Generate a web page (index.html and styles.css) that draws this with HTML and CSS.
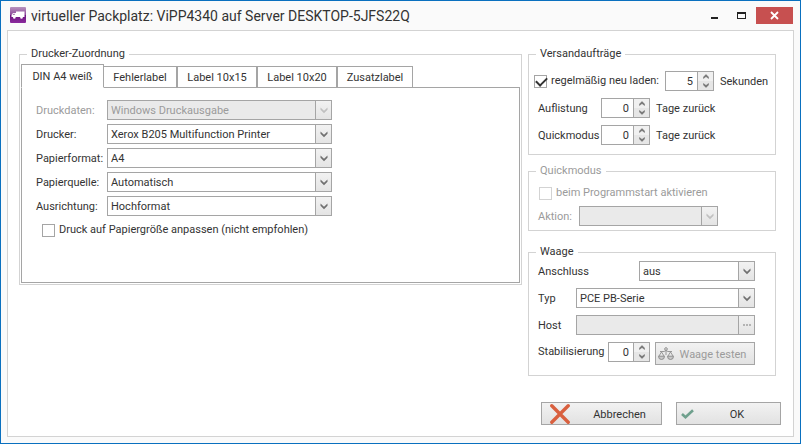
FILE: index.html
```html
<!DOCTYPE html>
<html lang="de">
<head>
<meta charset="utf-8">
<title>virtueller Packplatz</title>
<link rel="stylesheet" href="styles.css">
</head>
<body>
<svg class="sprite" aria-hidden="true">
  <symbol id="chevron" viewBox="0 0 8 7"><path d="M.5.500v2.200L4 6.200l3.500-3.500V.500L4 3.700z" fill="currentColor"/></symbol>
  <symbol id="up" viewBox="0 0 6 5"><path d="M.5 4.500V3L3 .5 5.500 3v1.500L3 2.500z" fill="currentColor" stroke="currentColor" stroke-width=".5"/></symbol>
  <symbol id="down" viewBox="0 0 6 5"><path d="M.5.5V2L3 4.500 5.500 2V.5L3 2.500z" fill="currentColor" stroke="currentColor" stroke-width=".5"/></symbol>
</svg>
<div class="window">
  <header class="titlebar">
    <svg class="app-icon" viewBox="0 0 16 16" aria-hidden="true">
      <defs><linearGradient id="violet" x1="0" y1="0" x2="0" y2="1"><stop offset="0" stop-color="#b794be"/><stop offset=".48" stop-color="#8f4a9c"/><stop offset=".52" stop-color="#6d1780"/><stop offset="1" stop-color="#8b2a9d"/></linearGradient></defs>
      <rect width="16" height="16" rx="1" fill="url(#violet)"/>
      <path d="M6 4.500h8.500v5.500H6zM3 6h3v4H1.500V8z" fill="#fff"/>
      <path d="M3.400 6.800h1.400v1.200H2.600z" fill="#a779b0"/>
      <circle cx="4.300" cy="10.500" r="1.300" fill="#fff"/><circle cx="11.500" cy="10.500" r="1.300" fill="#fff"/>
    </svg>
    <h1>virtueller Packplatz: ViPP4340 auf Server DESKTOP-5JFS22Q</h1>
    <div class="window-buttons">
      <button type="button" class="win-btn" aria-label="Minimieren"><svg width="9" height="9" viewBox="0 0 9 9"><path d="M1 6h7v2H1z" fill="#222"/></svg></button>
      <button type="button" class="win-btn" aria-label="Maximieren"><svg width="9" height="9" viewBox="0 0 9 9"><path d="M0 1h9v7H0zM1 3v4h7V3z" fill="#222" fill-rule="evenodd"/></svg></button>
      <button type="button" class="win-btn win-close" aria-label="Schließen"><svg width="9" height="9" viewBox="0 0 9 9"><path d="M1 1l7 7M8 1L1 8" stroke="#fff" stroke-width="1.800"/></svg></button>
    </div>
  </header>

  <form class="client">
    <div class="columns">
      <fieldset class="group printers">
        <legend>Drucker-Zuordnung</legend>
        <div class="tabs" role="tablist">
          <button type="button" role="tab" aria-selected="true" class="tab active">DIN A4 weiß</button>
          <button type="button" role="tab" aria-selected="false" class="tab">Fehlerlabel</button>
          <button type="button" role="tab" aria-selected="false" class="tab">Label 10x15</button>
          <button type="button" role="tab" aria-selected="false" class="tab">Label 10x20</button>
          <button type="button" role="tab" aria-selected="false" class="tab">Zusatzlabel</button>
        </div>
        <div class="tab-panel" role="tabpanel">
          <div class="field disabled"><label for="data">Druckdaten:</label>
            <span class="combo"><select id="data" disabled><option>Windows Druckausgabe</option></select><span class="arrow"><svg width="8" height="7"><use href="#chevron"/></svg></span></span></div>
          <div class="field"><label for="printer">Drucker:</label>
            <span class="combo"><select id="printer"><option>Xerox B205 Multifunction Printer</option></select><span class="arrow"><svg width="8" height="7"><use href="#chevron"/></svg></span></span></div>
          <div class="field"><label for="format">Papierformat:</label>
            <span class="combo"><select id="format"><option>A4</option></select><span class="arrow"><svg width="8" height="7"><use href="#chevron"/></svg></span></span></div>
          <div class="field"><label for="source">Papierquelle:</label>
            <span class="combo"><select id="source"><option>Automatisch</option></select><span class="arrow"><svg width="8" height="7"><use href="#chevron"/></svg></span></span></div>
          <div class="field"><label for="orient">Ausrichtung:</label>
            <span class="combo"><select id="orient"><option>Hochformat</option></select><span class="arrow"><svg width="8" height="7"><use href="#chevron"/></svg></span></span></div>
          <label class="check fit"><input type="checkbox">Druck auf Papiergröße anpassen (nicht empfohlen)</label>
        </div>
      </fieldset>

      <div class="side">
        <fieldset class="group orders">
          <legend>Versandaufträge</legend>
          <div class="row reload">
            <label class="check"><input type="checkbox" checked>regelmäßig neu laden:</label>
            <span class="spin"><input type="text" inputmode="numeric" value="5" aria-label="Sekunden"><span class="steps"><button type="button" aria-label="Mehr"><svg width="6" height="5"><use href="#up"/></svg></button><button type="button" aria-label="Weniger"><svg width="6" height="5"><use href="#down"/></svg></button></span></span>
            <span class="unit">Sekunden</span>
          </div>
          <div class="row days">
            <label for="list">Auflistung</label>
            <span class="spin"><input id="list" type="text" inputmode="numeric" value="0"><span class="steps"><button type="button" aria-label="Mehr"><svg width="6" height="5"><use href="#up"/></svg></button><button type="button" aria-label="Weniger"><svg width="6" height="5"><use href="#down"/></svg></button></span></span>
            <span class="unit">Tage zurück</span>
          </div>
          <div class="row days">
            <label for="quick">Quickmodus</label>
            <span class="spin"><input id="quick" type="text" inputmode="numeric" value="0"><span class="steps"><button type="button" aria-label="Mehr"><svg width="6" height="5"><use href="#up"/></svg></button><button type="button" aria-label="Weniger"><svg width="6" height="5"><use href="#down"/></svg></button></span></span>
            <span class="unit">Tage zurück</span>
          </div>
        </fieldset>

        <fieldset class="group quickmode disabled" disabled>
          <legend>Quickmodus</legend>
          <label class="check"><input type="checkbox">beim Programmstart aktivieren</label>
          <div class="row action">
            <label for="action">Aktion:</label>
            <span class="combo"><select id="action"><option></option></select><span class="arrow"><svg width="8" height="7"><use href="#chevron"/></svg></span></span>
          </div>
        </fieldset>

        <fieldset class="group scale">
          <legend>Waage</legend>
          <div class="row port"><label for="port">Anschluss</label>
            <span class="combo"><select id="port"><option>aus</option></select><span class="arrow"><svg width="8" height="7"><use href="#chevron"/></svg></span></span></div>
          <div class="row"><label for="type">Typ</label>
            <span class="combo"><select id="type"><option>PCE PB-Serie</option></select><span class="arrow"><svg width="8" height="7"><use href="#chevron"/></svg></span></span></div>
          <div class="row"><label for="host">Host</label>
            <span class="combo host"><input id="host" type="text" disabled><button type="button" class="more" disabled aria-label="Host auswählen"><svg width="8" height="2" viewBox="0 0 8 2"><path d="M0 0h2v2H0zM3 0h2v2H3zM6 0h2v2H6z" fill="#b4b4b4"/></svg></button></span></div>
          <div class="row stab"><label for="stab">Stabilisierung</label>
            <span class="spin"><input id="stab" type="text" inputmode="numeric" value="0"><span class="steps"><button type="button" aria-label="Mehr"><svg width="6" height="5"><use href="#up"/></svg></button><button type="button" aria-label="Weniger"><svg width="6" height="5"><use href="#down"/></svg></button></span></span>
            <button type="button" class="btn test" disabled><svg width="16" height="16" viewBox="0 0 16 16" fill="none" stroke="#8e8e8e" aria-hidden="true"><circle cx="8" cy="3" r="1.300"/><path d="M8 4.500V9M2 5.500h4l2-1 2 1h4M3.500 6L1 10M3.500 6L6 10M12.500 6L10 10M12.500 6l2.500 4" stroke-width=".9"/><path d="M.5 10.200h6a3 3.300 0 0 1-6 0zM9.500 10.200h6a3 3.300 0 0 1-6 0z" fill="#c8c8c8"/></svg><span>Waage testen</span></button></div>
        </fieldset>
      </div>
    </div>

    <footer class="actions">
      <button type="button" class="btn cancel"><svg width="20" height="20" viewBox="0 0 20 20" aria-hidden="true"><path d="M1.800 1.800l16.400 16.400M18.200 1.800L1.800 18.200" stroke="#d9603f" stroke-width="3.400" stroke-linecap="round"/></svg><span>Abbrechen</span></button>
      <button type="submit" class="btn ok"><svg width="13" height="10" viewBox="0 0 13 10" aria-hidden="true"><path d="M1 5l3.500 3.200L12 1.200" fill="none" stroke="#6fa08d" stroke-width="2.600"/></svg><span>OK</span></button>
    </footer>
  </form>
</div>
</body>
</html>
```
FILE: styles.css
```css
* { box-sizing: border-box; }

body {
  margin: 0;
  font: 11px/16px Roboto, "Liberation Sans", sans-serif;
  color: #333;
}

button, input, select { font: inherit; color: inherit; margin: 0; }
svg { display: block; flex: none; }
.sprite { display: none; }

.window {
  min-height: 100vh;
  display: flex;
  flex-direction: column;
  padding: 0 6px 6px;
  border: 1px solid #0a70bf;
  background: #fafafa;
}

.titlebar {
  display: flex;
  height: 29px;
  padding-left: 3px;
}
.app-icon { width: 16px; height: 16px; margin-top: 6px; }
.titlebar h1 {
  flex: 1;
  margin: 0 0 0 5px;
  font-size: 14px;
  font-weight: 400;
  line-height: 30px;
  white-space: nowrap;
}
.window-buttons { display: flex; padding: 6px 1px 0 0; }
.win-btn {
  width: 27px;
  height: 17px;
  padding: 0;
  border: 0;
  background: none;
  display: grid;
  place-items: center;
}
.win-close { width: 37px; margin-left: 1px; background: #c75050; }

.client {
  flex: 1;
  display: flex;
  flex-direction: column;
  padding: 15px 12px 11px 11px;
  border: 1px solid #d3d3d3;
  background: #fff;
}

.columns {
  display: grid;
  grid-template-columns: minmax(0, 1fr) 248px;
  gap: 6px;
  align-items: start;
  padding-right: 5px;
}
.side { display: flex; flex-direction: column; }

.group {
  --inset: 1px;
  min-width: 0;
  margin: 0;
  padding: 0 var(--inset);
  border: 1px solid #d3d3d3;
}
.group legend { margin-left: calc(7px - var(--inset)); padding: 0 4px; }
.disabled { color: #9b9b9b; }

.printers { padding-top: 2px; padding-bottom: 1px; }
.tabs { display: flex; align-items: flex-end; height: 24px; }
.tab {
  width: 80px;
  height: 22px;
  padding: 2px 0 0;
  border: 1px solid #a5a5a5;
  background: #fff;
  white-space: nowrap;
}
.tab.active {
  position: relative;
  z-index: 1;
  width: 83px;
  height: 24px;
  border-bottom-color: #fff;
}
.tab.active + .tab { width: 73px; border-left: 0; }
.tab:last-child { width: 76px; }
.tab-panel {
  height: 196px;
  margin-top: -1px;
  padding: 12px 14px;
  border: 1px solid #a5a5a5;
  display: flex;
  flex-direction: column;
  gap: 4px;
}

.field { display: grid; grid-template-columns: 71px 225px; align-items: center; }
.field label, .row > label:not(.check), .unit { padding-top: 2px; }

.combo {
  display: grid;
  grid-template-columns: 1fr 16px;
  height: 20px;
  border: 1px solid #a5a5a5;
  background: #fff;
}
.combo select, .combo input {
  grid-area: 1 / 1 / 2 / 3;
  min-width: 0;
  width: 100%;
  padding: 2px 18px 0 3px;
  border: 0;
  appearance: none;
  background: transparent;
  opacity: 1;
}
.arrow, .more {
  grid-area: 1 / 2;
  display: grid;
  place-items: center;
  padding: 0;
  border: 0;
  border-left: 1px solid #a5a5a5;
  background: linear-gradient(#f2f2f2, #e4e4e4);
  color: #707070;
  pointer-events: none;
}
.disabled .combo, .host { background: #eaeaea; }
.disabled .arrow { color: #c0c0c0; }

.check { display: flex; align-items: center; gap: 4px; white-space: nowrap; }
.check input {
  appearance: none;
  width: 13px;
  height: 13px;
  border: 1px solid #a5a5a5;
  background: #fff;
}
.check input:checked::before {
  content: "";
  display: block;
  width: 9px;
  height: 5px;
  margin: 1px;
  border: solid #333;
  border-width: 0 0 2px 2px;
  transform: rotate(-45deg);
}
.disabled .check input { border-color: #d3d3d3; }
.fit { padding: 2px 0 0 6px; }

.row { display: grid; grid-template-columns: 38px 1fr; align-items: center; }

.spin {
  display: grid;
  grid-template-columns: 1fr 16px;
  height: 20px;
  border: 1px solid #a5a5a5;
  background: #fff;
}
.spin input {
  min-width: 0;
  width: 100%;
  padding: 2px 4px 0 0;
  border: 0;
  background: none;
  text-align: right;
}
.steps { display: grid; border-left: 1px solid #a5a5a5; }
.steps button {
  display: grid;
  place-items: center;
  height: 9px;
  padding: 0;
  border: 0;
  background: #f0f0f0;
  color: #707070;
}
.steps button + button { background: #e6e6e6; }
.unit { padding-left: 6px; }

.orders {
  --inset: 5px;
  display: flex;
  flex-direction: column;
  gap: 7px;
  padding-top: 9px;
  padding-bottom: 9px;
}
.reload { grid-template-columns: 131px 49px auto; }
.days { grid-template-columns: 63px 49px auto; padding-left: 4px; }

.quickmode {
  --inset: 9px;
  margin-top: 8px;
  padding-top: 6px;
  padding-bottom: 4px;
}
.quickmode .check { padding-left: 1px; }
.action { grid-template-columns: 41px 139px; margin-top: 5px; }

.scale {
  --inset: 9px;
  margin-top: 13px;
  padding-top: 1px;
  padding-right: 20px;
  padding-bottom: 10px;
  display: flex;
  flex-direction: column;
  gap: 7px;
}
.port { grid-template-columns: 101px 1fr; }
.stab { grid-template-columns: 70px 42px 1fr; align-items: start; }

.btn {
  display: flex;
  align-items: center;
  height: 23px;
  padding: 0;
  border: 1px solid #a5a5a5;
  background: linear-gradient(#f2f2f2, #e2e2e2);
}
.btn span { flex: 1; padding-top: 2px; text-align: center; }
.btn:disabled { color: #9b9b9b; }
.test { margin-left: 5px; padding: 0 2px; }
.actions {
  display: flex;
  justify-content: flex-end;
  gap: 14px;
  margin-top: 26px;
}
.cancel { width: 121px; padding-left: 8px; }
.ok { width: 105px; padding-left: 4px; }
.cancel span { padding-left: 8px; }
```
